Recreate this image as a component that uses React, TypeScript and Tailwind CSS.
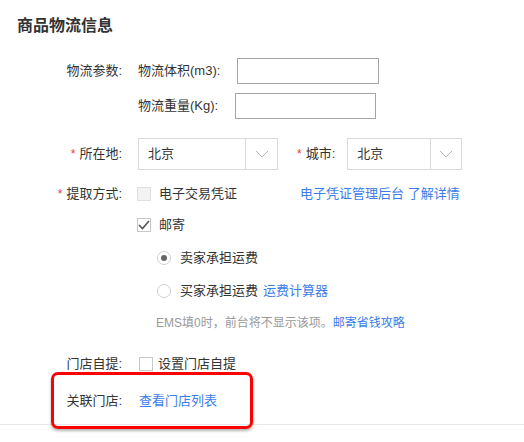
import type { ReactNode } from 'react'

const font = { fontFamily: '"Liberation Sans", "Noto Sans CJK SC", sans-serif' }

function Label({ children, required }: { children: ReactNode; required?: boolean }) {
  return (
    <div className="w-[122px] shrink-0 text-right text-[13px] text-[#333] flex items-center justify-end whitespace-nowrap">
      {required && <span className="text-[#e4393c] text-[12px] mr-[4px] leading-none">*</span>}
      <span>{children}</span>
    </div>
  )
}

function Chevron() {
  return (
    <svg width="14" height="8" viewBox="0 0 14 8" fill="none">
      <path d="M1 1l6 6 6-6" stroke="#b5b5b5" strokeWidth="1" />
    </svg>
  )
}

function Select({ value, width, arrowWidth }: { value: string; width: string; arrowWidth: string }) {
  return (
    <div className={`flex h-[32px] border border-[#d9d9d9] bg-white ${width}`}>
      <div className="flex-1 flex items-center pl-[9px] text-[13px] text-[#333]">{value}</div>
      <div className={`border-l border-[#d9d9d9] flex items-center justify-center ${arrowWidth}`}>
        <Chevron />
      </div>
    </div>
  )
}

function Checkbox({ checked, disabled }: { checked?: boolean; disabled?: boolean }) {
  return (
    <span
      className={`w-[14px] h-[14px] shrink-0 border flex items-center justify-center ${
        disabled ? 'bg-[#f2f2f2] border-[#e0e0e0]' : 'bg-white border-[#c8c8c8]'
      }`}
    >
      {checked && (
        <svg width="12" height="10" viewBox="0 0 12 10" fill="none">
          <path d="M1 5l3.5 3.5L11 1" stroke="#555" strokeWidth="1.6" />
        </svg>
      )}
    </span>
  )
}

function Radio({ checked }: { checked?: boolean }) {
  return (
    <span className="w-[14px] h-[14px] shrink-0 rounded-full border border-[#d0d0d0] bg-white flex items-center justify-center">
      {checked && <span className="w-[6px] h-[6px] rounded-full bg-[#666]" />}
    </span>
  )
}

const link = 'text-[#3b7de9]'

export default function App() {
  return (
    <div className="relative w-[524px] h-[442px] bg-white overflow-hidden" style={font}>
      {/* 标题 */}
      <div className="h-[52px] flex items-center pl-[17px] text-[16px] font-semibold text-[#333]">商品物流信息</div>

      {/* 物流参数 */}
      <div className="mt-[6px] h-[26px] flex">
        <Label>物流参数:</Label>
        <div className="ml-[16px] flex items-center text-[13px] text-[#333] whitespace-nowrap">
          <span>物流体积(m3):</span>
          <span className="ml-[17px] w-[142px] h-[26px] border border-[#a6a6a6] bg-white" />
        </div>
      </div>
      <div className="mt-[9px] h-[26px] flex">
        <div className="w-[122px] shrink-0" />
        <div className="ml-[16px] flex items-center text-[13px] text-[#333] whitespace-nowrap">
          <span>物流重量(Kg):</span>
          <span className="ml-[17px] w-[141px] h-[26px] border border-[#a6a6a6] bg-white" />
        </div>
      </div>

      {/* 所在地 */}
      <div className="mt-[19px] h-[32px] flex">
        <Label required>所在地:</Label>
        <div className="ml-[16px] flex items-center">
          <Select value="北京" width="w-[140px]" arrowWidth="w-[32px]" />
          <div className="ml-[19px] flex items-center text-[13px] text-[#333] whitespace-nowrap">
            <span className="text-[#e4393c] text-[12px] mr-[4px] leading-none">*</span>
            <span>城市:</span>
          </div>
          <div className="ml-[12px]">
            <Select value="北京" width="w-[115px]" arrowWidth="w-[31px]" />
          </div>
        </div>
      </div>

      {/* 提取方式 */}
      <div className="mt-[11px] h-[26px] flex">
        <Label required>提取方式:</Label>
        <div className="ml-[15px] flex items-center text-[13px] text-[#333] whitespace-nowrap">
          <Checkbox disabled />
          <span className="ml-[8px]">电子交易凭证</span>
          <span className={`ml-[63px] ${link}`}>电子凭证管理后台 了解详情</span>
        </div>
      </div>
      <div className="mt-[5px] h-[26px] flex">
        <div className="w-[122px] shrink-0" />
        <div className="ml-[15px] flex items-center text-[13px] text-[#333]">
          <Checkbox checked />
          <span className="ml-[8px]">邮寄</span>
        </div>
      </div>
      <div className="mt-[7px] h-[26px] flex">
        <div className="w-[122px] shrink-0" />
        <div className="ml-[35px] flex items-center text-[13px] text-[#333] whitespace-nowrap">
          <Radio checked />
          <span className="ml-[9px]">卖家承担运费</span>
        </div>
      </div>
      <div className="mt-[7px] h-[26px] flex">
        <div className="w-[122px] shrink-0" />
        <div className="ml-[35px] flex items-center text-[13px] text-[#333] whitespace-nowrap">
          <Radio />
          <span className="ml-[9px]">买家承担运费</span>
          <span className={`ml-[5px] ${link}`}>运费计算器</span>
        </div>
      </div>
      <div className="mt-[6px] h-[26px] flex">
        <div className="w-[122px] shrink-0" />
        <div className="ml-[34px] flex items-center text-[12px] text-[#999] whitespace-nowrap">
          <span>EMS填0时，前台将不显示该项。</span>
          <span className={link}>邮寄省钱攻略</span>
        </div>
      </div>

      {/* 门店自提 */}
      <div className="mt-[15px] h-[26px] flex">
        <Label>门店自提:</Label>
        <div className="ml-[17px] flex items-center text-[13px] text-[#333] whitespace-nowrap">
          <Checkbox />
          <span className="ml-[5px]">设置门店自提</span>
        </div>
      </div>
      <div className="mt-[11px] h-[26px] flex">
        <Label>关联门店:</Label>
        <div className="ml-[17px] flex items-center text-[13px] whitespace-nowrap">
          <span className={link}>查看门店列表</span>
        </div>
      </div>

      <div className="mt-[10px] border-t border-[#e8e8e8]" />

      {/* 标注框 */}
      <div className="absolute left-[51px] top-[372px] w-[202px] h-[57px] border-[3px] border-[#ff0000] rounded-[7px] shadow-[0_2px_3px_rgba(0,0,0,0.3)]" />
    </div>
  )
}
